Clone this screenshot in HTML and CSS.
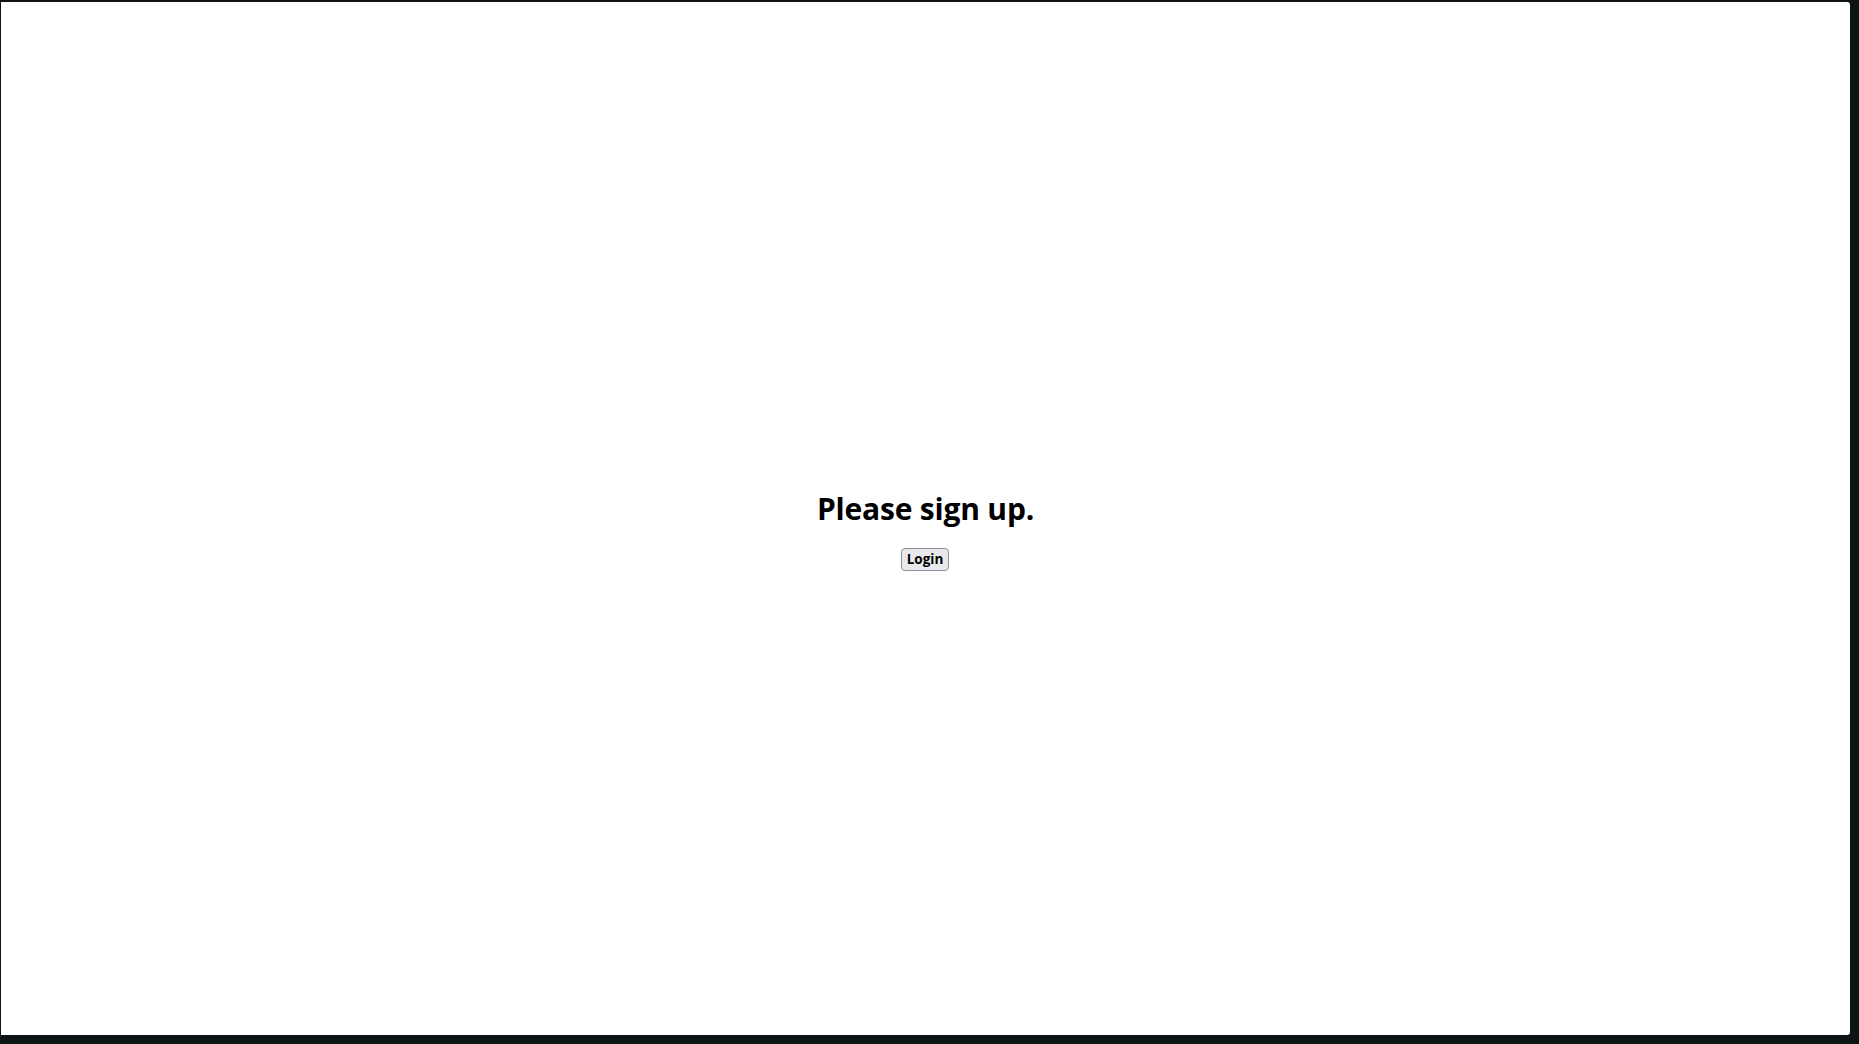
FILE: index.html
```html
<!DOCTYPE html>
<html lang="en">
<head>
<meta charset="utf-8">
<title>Please sign up</title>
<link rel="stylesheet" href="styles.css">
</head>
<body>
<div class="frame">
  <main class="center">
    <h1 class="title">Please sign up.</h1>
    <button class="login-btn" type="button">Login</button>
  </main>
</div>
</body>
</html>
```

FILE: styles.css
```css
html, body {
  margin: 0;
  height: 100%;
}
body {
  background: #0e1315;
  box-sizing: border-box;
  padding: 2px 9px 9px 1px;
}
.frame {
  height: 100%;
  background: #ffffff;
  border-radius: 0 3px 3px 0;
  display: flex;
  align-items: center;
  justify-content: center;
}
.center {
  display: flex;
  flex-direction: column;
  align-items: center;
  margin-top: 22px;
}
.title {
  font-family: "Open Sans", "Noto Sans", sans-serif;
  font-weight: 700;
  font-size: 30px;
  line-height: 40px;
  color: #000;
  margin: 0 0 19px 0;
  letter-spacing: -0.2px;
}
.login-btn {
  font-family: "Open Sans", "Noto Sans", sans-serif;
  font-weight: 700;
  font-size: 13.5px;
  line-height: 17px;
  color: #000;
  background: #e9e9ed;
  border: 1px solid #8f8f9d;
  border-radius: 4px;
  padding: 2px 4px;
  height: 23px;
  width: 48px;
  margin-right: 1px;
}
```
